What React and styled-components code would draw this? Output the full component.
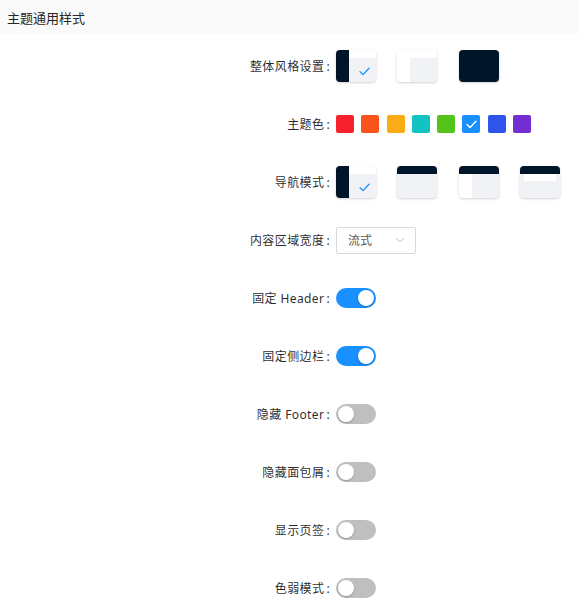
import React from "react";
import styled, { createGlobalStyle } from "styled-components";

const GlobalStyle = createGlobalStyle`
  html, body {
    margin: 0;
    padding: 0;
    background: #ffffff;
  }
  body {
    font-family: "Noto Sans", "Noto Sans CJK SC", sans-serif;
    -webkit-font-smoothing: antialiased;
  }
`;

const DARK = "#001529";
const LIGHT = "#f0f2f5";
const BLUE = "#1890ff";

const colors = [
  "#f5222d",
  "#fa541c",
  "#faad14",
  "#13c2c2",
  "#52c41a",
  "#1890ff",
  "#2f54eb",
  "#722ed1",
];

const Page = styled.div`
  width: 579px;
  height: 604px;
  overflow: hidden;
  display: flex;
  flex-direction: column;
`;

const SectionHead = styled.div`
  height: 34px;
  flex-shrink: 0;
  display: flex;
  align-items: center;
  padding-left: 7px;
  background: #fafafa;
  color: #262626;
  font-size: 13px;
  font-weight: 400;
`;

const Form = styled.div`
  display: flex;
  flex-direction: column;
  gap: 26px;
  padding-top: 16px;
`;

const Row = styled.div`
  display: grid;
  grid-template-columns: 336px 1fr;
  align-items: center;
  min-height: 32px;
`;

const Label = styled.label`
  text-align: right;
  padding-right: 6px;
  font-size: 12px;
  letter-spacing: 0.4px;
  color: rgba(0, 0, 0, 0.85);
  white-space: nowrap;
  &::after {
    content: ":";
    margin-left: 2px;
  }
`;

const Options = styled.div`
  display: flex;
  align-items: center;
  gap: ${(p) => p.$gap}px;
`;

const Thumb = styled.div`
  position: relative;
  width: 40px;
  height: 32px;
  border-radius: 4px;
  overflow: hidden;
  background: ${(p) => (p.$dark ? DARK : LIGHT)};
  box-shadow: 0 1px 2.5px rgba(0, 0, 0, 0.18);
  cursor: pointer;
  svg.layout {
    display: block;
  }
`;

const Check = styled.svg`
  position: absolute;
  left: ${(p) => p.$left}px;
  top: ${(p) => p.$top}px;
`;

const Swatch = styled.div`
  position: relative;
  width: 18px;
  height: 18px;
  border-radius: 2px;
  background: ${(p) => p.$color};
  display: flex;
  align-items: center;
  justify-content: center;
  cursor: pointer;
`;

const Control = styled.div`
  display: flex;
  align-items: center;
`;

const Select = styled.div`
  width: 80px;
  height: 27px;
  box-sizing: border-box;
  border: 1px solid #d9d9d9;
  border-radius: 2px;
  display: flex;
  align-items: center;
  justify-content: space-between;
  padding: 0 10px 0 11px;
  font-size: 12px;
  color: #595959;
  background: #fff;
`;

const Switch = styled.button`
  position: relative;
  display: block;
  width: 40px;
  height: 20px;
  border: 0;
  padding: 0;
  border-radius: 10px;
  background: ${(p) => (p.$on ? BLUE : "#bfbfbf")};
  cursor: pointer;
  &::after {
    content: "";
    position: absolute;
    top: 2px;
    left: ${(p) => (p.$on ? "22px" : "2px")};
    width: 16px;
    height: 16px;
    border-radius: 50%;
    background: #fff;
    box-shadow: 0 1px 2px rgba(0, 35, 11, 0.25);
  }
`;

function CheckMark({ color = BLUE, left, top }) {
  return (
    <Check $left={left} $top={top} width="11" height="9" viewBox="0 0 11 9">
      <path
        d="M1 4.6 L4 7.6 L10 1.2"
        fill="none"
        stroke={color}
        strokeWidth="1.3"
        strokeLinecap="round"
        strokeLinejoin="round"
      />
    </Check>
  );
}

// small layout previews: side = dark/white sidebar, top = dark header, inner = fixed-width band
function Layout({ side, top, inner, headWhite }) {
  return (
    <svg className="layout" width="40" height="32" viewBox="0 0 40 32">
      {headWhite && <rect x="0" y="0" width="40" height="8" fill="#ffffff" />}
      {top && <rect x="0" y="0" width="40" height="8" fill={DARK} />}
      {side && (
        <rect
          x="0"
          y={top ? 8 : 0}
          width="13"
          height={top ? 24 : 32}
          fill={side === "dark" ? DARK : "#ffffff"}
        />
      )}
      {inner && <rect x="4" y="8" width="32" height="7" fill="#ffffff" />}
    </svg>
  );
}

function ToggleRow({ label, on }) {
  return (
    <Row>
      <Label>{label}</Label>
      <Control>
        <Switch $on={on} aria-pressed={on} />
      </Control>
    </Row>
  );
}

export default function App() {
  return (
    <Page>
      <GlobalStyle />
      <SectionHead>主题通用样式</SectionHead>
      <Form>
        <Row>
          <Label>整体风格设置</Label>
          <Options $gap={21.3}>
            <Thumb>
              <Layout side="dark" headWhite />
              <CheckMark left={23} top={17} />
            </Thumb>
            <Thumb>
              <Layout side="light" headWhite />
            </Thumb>
            <Thumb $dark />
          </Options>
        </Row>

        <Row>
          <Label>主题色</Label>
          <Options $gap={7.3}>
            {colors.map((c) => (
              <Swatch key={c} $color={c}>
                {c === BLUE && (
                  <svg width="11" height="9" viewBox="0 0 11 9">
                    <path
                      d="M1 4.6 L4 7.6 L10 1.2"
                      fill="none"
                      stroke="#fff"
                      strokeWidth="1.4"
                      strokeLinecap="round"
                      strokeLinejoin="round"
                    />
                  </svg>
                )}
              </Swatch>
            ))}
          </Options>
        </Row>

        <Row>
          <Label>导航模式</Label>
          <Options $gap={21.3}>
            <Thumb>
              <Layout side="dark" headWhite />
              <CheckMark left={23} top={17} />
            </Thumb>
            <Thumb>
              <Layout top />
            </Thumb>
            <Thumb>
              <Layout top side="light" />
            </Thumb>
            <Thumb>
              <Layout top inner />
            </Thumb>
          </Options>
        </Row>

        <Row>
          <Label>内容区域宽度</Label>
          <Control>
            <Select>
              <span>流式</span>
              <svg width="10" height="6" viewBox="0 0 10 6">
                <path
                  d="M1 1 L5 5 L9 1"
                  fill="none"
                  stroke="#bfbfbf"
                  strokeWidth="1"
                />
              </svg>
            </Select>
          </Control>
        </Row>

        <ToggleRow label="固定 Header" on />
        <ToggleRow label="固定侧边栏" on />
        <ToggleRow label="隐藏 Footer" />
        <ToggleRow label="隐藏面包屑" />
        <ToggleRow label="显示页签" />
        <ToggleRow label="色弱模式" />
      </Form>
    </Page>
  );
}
